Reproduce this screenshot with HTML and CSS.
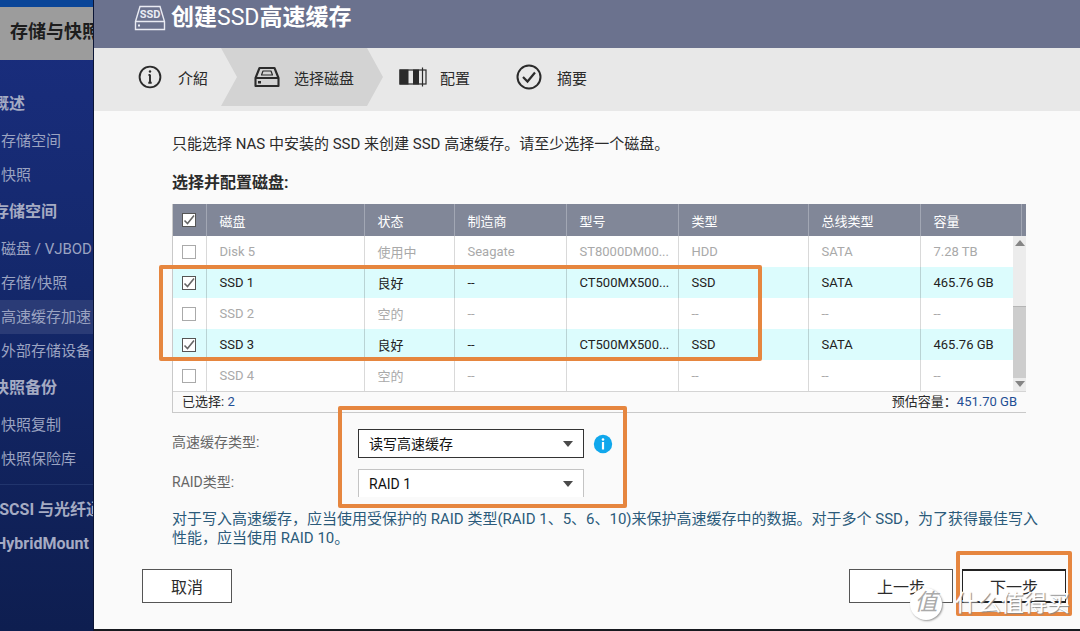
FILE: index.html
```html
<!DOCTYPE html>
<html lang="zh-CN">
<head>
<meta charset="utf-8">
<title>创建SSD高速缓存</title>
<link rel="stylesheet" href="styles.css">
</head>
<body>
<div class="app">
  <aside class="sidebar">
    <div class="topbar"></div>
    <div class="app-title">存储与快照</div>
    <nav class="nav">
      <div class="group">概述</div>
      <a class="item" href="#">存储空间</a>
      <a class="item" href="#">快照</a>
      <div class="group">存储空间</div>
      <a class="item" href="#">磁盘 / VJBOD</a>
      <a class="item" href="#">存储/快照</a>
      <a class="item current" href="#">高速缓存加速</a>
      <a class="item" href="#">外部存储设备</a>
      <div class="group">快照备份</div>
      <a class="item" href="#">快照复制</a>
      <a class="item" href="#">快照保险库</a>
      <div class="rule"></div>
      <div class="group latin">iSCSI 与光纤通道</div>
      <div class="group latin">HybridMount</div>
    </nav>
  </aside>

  <main class="dialog">
    <header class="head">
      <svg class="ssd-icon" width="32" height="26" viewBox="0 0 32 26" fill="none" stroke="#e9ebf3" stroke-width="1.4" aria-hidden="true">
        <path d="M1.5 16.5 6 1.5H26L30.500 16.500V24.500H1.500ZM1.500 16.500H30.500"/>
        <rect x="4" y="19.500" width="2" height="2" fill="#e9ebf3" stroke="none"/>
        <text x="16" y="13" text-anchor="middle" class="ssd-word">SSD</text>
      </svg>
      <h1>创建<span>SSD</span>高速缓存</h1>
    </header>

    <ol class="steps">
      <li class="step first">
        <svg width="24" height="24" viewBox="0 0 24 24" fill="none" stroke="#2b2b2b" aria-hidden="true">
          <circle cx="12" cy="12" r="10.400" stroke-width="1.900"/>
          <path d="M12 9.500v8.500M10.500 10H12M10.300 17.700h3.400" stroke-width="1.900"/>
          <circle cx="12" cy="6.500" r="1.200" fill="#2b2b2b" stroke="none"/>
        </svg>
        <span>介紹</span>
      </li>
      <li class="step active">
        <svg width="26" height="22" viewBox="0 0 26 22" fill="none" stroke="#2b2b2b" stroke-width="2.100" stroke-linejoin="round" aria-hidden="true">
          <path d="M1.500 12 5.500 2H20.500L24.500 12V20H1.500ZM1.500 12H24.500"/>
          <path d="M9 5H17L18.500 9H7.500Z" stroke-width="1.200"/>
          <rect x="4" y="15" width="3" height="2.500" fill="#2b2b2b" stroke="none"/>
        </svg>
        <span>选择磁盘</span>
      </li>
      <li class="step config">
        <svg width="28" height="20" viewBox="0 0 28 20" fill="none" stroke="#2b2b2b" aria-hidden="true">
          <rect x="1" y="3" width="26" height="14" stroke-width="1.200"/>
          <path d="M0.500 2.500h9v15h-9zM14 2.500h6v15h-6z" fill="#2b2b2b" stroke="none"/>
          <path d="M23.500 0.500v19" stroke-width="1.200"/>
        </svg>
        <span>配置</span>
      </li>
      <li class="step last">
        <svg width="26" height="26" viewBox="0 0 26 26" fill="none" stroke="#2b2b2b" aria-hidden="true">
          <circle cx="13" cy="13" r="11.500" stroke-width="2"/>
          <path d="M7 13l4.500 4.500L19 8.500" stroke-width="2.200"/>
        </svg>
        <span>摘要</span>
      </li>
    </ol>

    <section class="body">
      <p class="intro">只能选择 NAS 中安装的 SSD 来创建 SSD 高速缓存。请至少选择一个磁盘。</p>
      <h2>选择并配置磁盘:</h2>

      <div class="disks">
        <div class="grid">
          <table>
            <colgroup><col class="c-check"><col class="c-disk"><col class="c-state"><col class="c-maker"><col class="c-maker"><col class="c-type"><col class="c-bus"><col></colgroup>
            <thead>
              <tr><th><input type="checkbox" checked aria-label="全选"></th><th>磁盘</th><th>状态</th><th>制造商</th><th>型号</th><th>类型</th><th>总线类型</th><th>容量</th></tr>
            </thead>
            <tbody>
              <tr><td><input type="checkbox" aria-label="Disk 5"></td><td>Disk 5</td><td>使用中</td><td>Seagate</td><td>ST8000DM00...</td><td>HDD</td><td>SATA</td><td>7.28 TB</td></tr>
              <tr class="picked"><td><input type="checkbox" checked aria-label="SSD 1"></td><td>SSD 1</td><td>良好</td><td>--</td><td>CT500MX500...</td><td>SSD</td><td>SATA</td><td>465.76 GB</td></tr>
              <tr><td><input type="checkbox" aria-label="SSD 2"></td><td>SSD 2</td><td>空的</td><td>--</td><td></td><td>--</td><td>--</td><td>--</td></tr>
              <tr class="picked"><td><input type="checkbox" checked aria-label="SSD 3"></td><td>SSD 3</td><td>良好</td><td>--</td><td>CT500MX500...</td><td>SSD</td><td>SATA</td><td>465.76 GB</td></tr>
              <tr><td><input type="checkbox" aria-label="SSD 4"></td><td>SSD 4</td><td>空的</td><td>--</td><td></td><td>--</td><td>--</td><td>--</td></tr>
            </tbody>
          </table>
          <div class="scroll">
            <div class="scroll-cap"></div>
            <div class="track">
              <i class="up"></i>
              <i class="thumb"></i>
              <i class="down"></i>
            </div>
          </div>
        </div>
        <div class="summary">
          <span>已选择: <b>2</b></span>
          <span>预估容量：<b>451.70 GB</b></span>
        </div>
        <div class="mark mark-disks"></div>
      </div>

      <div class="options">
        <label for="cache-type">高速缓存类型:</label>
        <div class="field">
          <div class="select focused"><select id="cache-type"><option>读写高速缓存</option></select></div>
          <svg width="20" height="20" viewBox="0 0 20 20" aria-hidden="true">
            <circle cx="10" cy="10" r="9.200" fill="#10a7ec"/>
            <path d="M10 8V15.500" fill="none" stroke="#fff" stroke-width="2.200"/>
            <circle cx="10" cy="5.500" r="1.300" fill="#fff"/>
          </svg>
        </div>
        <label for="raid-type">RAID类型:</label>
        <div class="field">
          <div class="select open"><select id="raid-type"><option>RAID 1</option></select></div>
        </div>
        <div class="mark mark-options"></div>
      </div>

      <p class="advice">对于写入高速缓存，应当使用受保护的 RAID 类型(RAID 1、5、6、10)来保护高速缓存中的数据。对于多个 SSD，为了获得最佳写入性能，应当使用 RAID 10。</p>
    </section>

    <footer class="actions">
      <button class="btn cancel" type="button">取消</button>
      <button class="btn" type="button">上一步</button>
      <div class="next">
        <button class="btn primary" type="button">下一步</button>
        <div class="mark mark-next"></div>
      </div>
      <div class="watermark"><span class="seal">值</span><span class="brand">什么值得买</span></div>
    </footer>
  </main>
</div>
</body>
</html>
```
FILE: styles.css
```css
* { box-sizing: border-box; }

body {
  margin: 0;
  background: #10131c;
  color: #2b2b2b;
  font-family: Roboto, "Noto Sans CJK SC", sans-serif;
  font-size: 15px;
  overflow: hidden;
}

h1, h2, p, ol { margin: 0; padding: 0; }

.app {
  display: grid;
  grid-template-columns: 94px minmax(0, 1fr);
  min-height: 100vh;
}

/* Sidebar, cut off at its left edge */
.sidebar {
  overflow: hidden;
  white-space: nowrap;
  background: linear-gradient(#1a2e80, #14286b 45%, #0e1e50);
  border-right: 1px solid #0b1535;
}
.topbar { height: 7px; background: #0a4598; }
.app-title {
  height: 53px;
  padding-left: 10px;
  background: #9c9c9c;
  color: #1d1d1d;
  font-size: 18px;
  font-weight: 700;
  line-height: 50px;
}
.nav { padding-top: 24px; }
.group {
  height: 40px;
  margin-left: -7px;
  color: #a5abc3;
  font-size: 16px;
  font-weight: 700;
  line-height: 40px;
}
.group.latin { height: 34px; line-height: 34px; margin-left: -5px; }
.item {
  display: block;
  height: 34px;
  padding-left: 1px;
  color: #9ba3c1;
  line-height: 34px;
  text-decoration: none;
}
.item.current { background: #2a3b76; }
.rule { height: 1px; margin: 8px 0; background: #21356d; }

/* Dialog */
.dialog {
  display: flex;
  flex-direction: column;
  background: #fafafa;
  border-bottom: 2px solid #17191f;
}
.head {
  display: flex;
  align-items: center;
  gap: 5px;
  height: 48px;
  padding: 0 41px 12px 40px;
  background: #6b728e;
  color: #fff;
}
.head h1 { font-size: 23px; line-height: 32px; font-weight: 700; }
.head h1 span { font-weight: 400; }
.ssd-word { font-size: 11px; font-weight: 700; fill: #e9ebf3; stroke: none; }

.steps {
  display: flex;
  height: 63px;
  background: #e8e8e8;
  list-style: none;
}
.step { display: flex; align-items: center; height: 58px; }
.step.first { width: 127px; padding-left: 44px; gap: 16px; }
.step.active {
  width: 162px;
  padding-left: 33px;
  gap: 14px;
  background: #d3d3d3;
  clip-path: polygon(0 0, 146px 0, 100% 50%, 146px 100%, 0 100%, 16px 50%);
}
.step.config { padding-left: 16px; gap: 13px; }
.step.last { padding-left: 46px; gap: 15px; }

.body { padding: 23px 54px 0 78px; }
.intro { line-height: 20px; }
h2 { margin: 19px 0 11px; font-size: 16px; line-height: 20px; font-weight: 700; }

/* Disk list */
.disks { position: relative; border-left: 1px solid #c9c9c9; }
.grid { display: grid; grid-template-columns: minmax(0, 1fr) 13px; border-bottom: 1px solid #d4d4d4; }
table { width: 100%; table-layout: fixed; border-collapse: collapse; font-size: 13px; background: #fff; }
.c-check { width: 33px; }
.c-disk { width: 158px; }
.c-state { width: 90px; }
.c-maker { width: 112px; }
.c-type { width: 130px; }
.c-bus { width: 112px; }
th, td { padding: 0 0 0 13px; text-align: left; white-space: nowrap; border-right: 1px solid #d9d9d9; }
th { height: 32px; background: #818798; color: #fff; font-weight: 400; border-right-color: #a2a7b4; }
td { height: 31px; color: #a9a9a9; }
th:first-child, td:first-child { padding-left: 9px; }
th:last-child, td:last-child { border-right: 0; }
.picked td { background: #dcfcfd; color: #222; border-right-color: #b9d3d4; }

input[type="checkbox"] {
  display: block;
  width: 14px;
  height: 14px;
  margin: 0;
  appearance: none;
  background: #fff;
  border: 1px solid #aaa;
}
input[type="checkbox"]:checked {
  border-color: #555;
  background: #fff url("data:image/svg+xml,%3Csvg xmlns='http://www.w3.org/2000/svg' viewBox='0 0 12 12'%3E%3Cpath d='M1.500 6.500L4.500 9.500L11 1.500' fill='none' stroke='%23666' stroke-width='1.600'/%3E%3C/svg%3E");
}

.scroll { display: flex; flex-direction: column; }
.scroll-cap { height: 32px; background: linear-gradient(90deg, #818798 8px, #a2a7b4 8px, #a2a7b4 9px, #818798 9px); }
.track { display: flex; flex: 1; flex-direction: column; align-items: center; padding: 4px 0; background: #ececec; }
.up, .down { border: 5px solid transparent; }
.up { border-top: 0; border-bottom: 6px solid #858585; }
.down { border-bottom: 0; border-top: 6px solid #858585; margin-top: 3px; }
.thumb { width: 100%; height: 72px; margin-top: auto; background: #cdcdcd; border-top: 1px solid #b5b5b5; }

.summary {
  display: flex;
  justify-content: space-between;
  padding: 0 9px;
  border-bottom: 1px solid #c9c9c9;
  font-size: 13px;
  line-height: 20px;
}
.summary b { color: #1f4f94; font-weight: 400; }

/* Highlight frames drawn over the content */
.mark { position: absolute; border: 4px solid #e6863f; border-radius: 2px; pointer-events: none; }
.mark-disks { left: -14px; top: 61px; width: 603px; height: 96px; }
.mark-options { left: 166px; top: -23px; width: 289px; height: 102px; }
.mark-next { inset: -18px -6px -13px -6px; }

/* Cache options */
.options {
  position: relative;
  display: grid;
  grid-template-columns: 186px minmax(0, 1fr);
  row-gap: 11px;
  margin-top: 16px;
}
.options label { color: #666; font-size: 14px; line-height: 26px; }
.field { display: flex; align-items: center; gap: 9px; }
.select { position: relative; width: 226px; }
.select select {
  display: block;
  width: 100%;
  height: 29px;
  padding: 0 10px;
  appearance: none;
  background: #fff;
  border: 1px solid #c4c4c4;
  border-radius: 0;
  color: #111;
  font: inherit;
  font-size: 14px;
}
.select.focused select { border-color: #333; }
.select.open select { height: 28px; border-bottom: 0; }
.select::after {
  content: "";
  position: absolute;
  right: 11px;
  top: 12px;
  border: 5px solid transparent;
  border-top: 6px solid #4a4a4a;
  border-bottom: 0;
  pointer-events: none;
}

.advice { margin: 13px -24px 0 0; color: #2b5a7a; line-height: 19px; }

.actions {
  position: relative;
  display: flex;
  align-items: flex-start;
  gap: 9px;
  margin-top: auto;
  padding: 0 14px 26px 48px;
}
.btn {
  display: block;
  width: 104px;
  height: 34px;
  padding: 0;
  background: #fff;
  border: 1px solid #555;
  color: #2b2b2b;
  font: inherit;
  font-size: 16px;
}
.cancel { width: 90px; margin-right: auto; }
.primary { border: 2px solid #222; border-width: 2px 1px; }
.next { position: relative; }

.watermark {
  position: absolute;
  right: 10px;
  bottom: 8px;
  display: flex;
  align-items: center;
  gap: 13px;
  color: #fff;
  font-size: 23px;
  line-height: 34px;
  pointer-events: none;
}
.seal {
  width: 32px;
  height: 32px;
  border-radius: 50%;
  background: #fff;
  box-shadow: 1px 1px 2px #999;
  color: #aaa;
  font-style: italic;
  line-height: 30px;
  text-align: center;
}
.brand { text-shadow: 1px 1px 1px #888; }
```
